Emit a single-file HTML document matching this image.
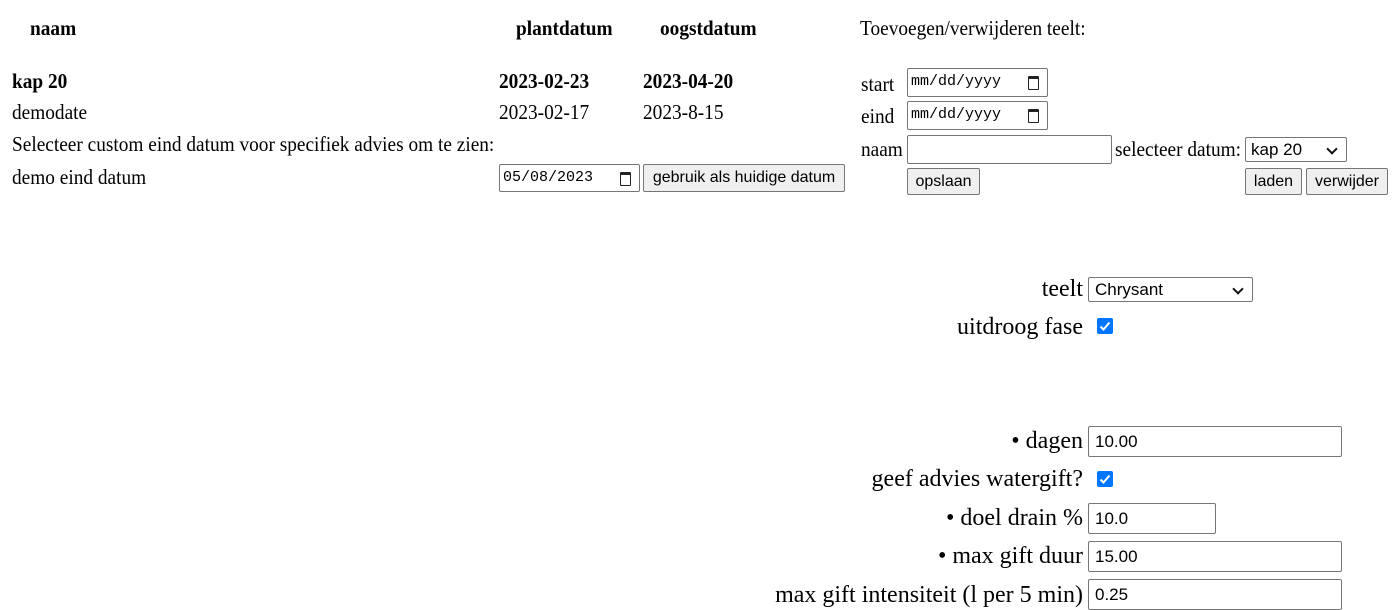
<!DOCTYPE html>
<html><head><style>
body{margin:0;width:1395px;height:609px;overflow:hidden;background:#fff;font-family:"Liberation Serif",serif;font-size:21px;color:#000;position:relative}
.t{position:absolute;white-space:nowrap;line-height:22px;transform:scaleX(0.92);transform-origin:left center}
.b{font-weight:bold}
.r{text-align:right;transform:none;font-size:24px;line-height:24px}
.in{position:absolute;box-sizing:border-box;border:1px solid #767676;border-radius:2px;background:#fff;font-family:"Liberation Sans",sans-serif;font-size:17px;padding:0 6px;line-height:26px;white-space:nowrap}
.dt{font-family:"Liberation Mono",monospace;font-size:15px;padding-left:3px}
.cal{position:absolute;right:8px;top:7px;width:9px;height:10px;border:1.6px solid #222;border-top-width:3px;border-radius:1px}
.btn{position:absolute;box-sizing:border-box;border:1px solid #767676;border-radius:2px;background:#efefef;font-family:"Liberation Sans",sans-serif;font-size:16px;text-align:center;line-height:25px;white-space:nowrap}
.cb{position:absolute;width:16px;height:16px;background:#0075ff;border-radius:2px}
.cb svg{display:block}
.chev{position:absolute;right:10px;top:7px;width:6px;height:6px;border-right:2px solid #111;border-bottom:2px solid #111;transform:rotate(45deg)}
</style></head><body>
<div class="t b" style="left:30px;top:17px">naam</div>
<div class="t b" style="left:516px;top:17px">plantdatum</div>
<div class="t b" style="left:660px;top:17px">oogstdatum</div>
<div class="t" style="left:860px;top:17px">Toevoegen/verwijderen teelt:</div>

<div class="t b" style="left:12px;top:70px">kap 20</div>
<div class="t b" style="left:499px;top:70px">2023-02-23</div>
<div class="t b" style="left:643px;top:70px">2023-04-20</div>
<div class="t" style="left:12px;top:101px">demodate</div>
<div class="t" style="left:499px;top:101px">2023-02-17</div>
<div class="t" style="left:643px;top:101px">2023-8-15</div>
<div class="t" style="left:12px;top:133px">Selecteer custom eind datum voor specifiek advies om te zien:</div>
<div class="t" style="left:12px;top:166px">demo eind datum</div>
<div class="in dt" style="left:499px;top:164px;width:141px;height:28px">05/08/2023<span class="cal"></span></div>
<div class="btn" style="left:643px;top:164px;width:202px;height:28px">gebruik als huidige datum</div>

<div class="t" style="left:861px;top:73px">start</div>
<div class="in dt" style="left:907px;top:68px;width:141px;height:29px">mm/dd/yyyy<span class="cal"></span></div>
<div class="t" style="left:861px;top:105px">eind</div>
<div class="in dt" style="left:907px;top:101px;width:141px;height:29px">mm/dd/yyyy<span class="cal"></span></div>
<div class="t" style="left:861px;top:138px">naam</div>
<div class="in" style="left:907px;top:135px;width:205px;height:29px"></div>
<div class="t" style="left:1115px;top:138px">selecteer datum:</div>
<div class="in" style="left:1245px;top:137px;width:102px;height:25px;line-height:23px;padding-left:5px">kap 20<span class="chev"></span></div>
<div class="btn" style="left:907px;top:168px;width:73px;height:27px">opslaan</div>
<div class="btn" style="left:1245px;top:168px;width:57px;height:27px">laden</div>
<div class="btn" style="left:1306px;top:168px;width:82px;height:27px">verwijder</div>

<div class="t r" style="right:312px;top:277px">teelt</div>
<div class="in" style="left:1088px;top:277px;width:165px;height:25px;line-height:23px;padding-left:6px">Chrysant<span class="chev"></span></div>
<div class="t r" style="right:312px;top:315px">uitdroog fase</div>
<div class="cb" style="left:1097px;top:318px"><svg width="16" height="16"><path d="M3.5 8.5l3 3 6-7" stroke="#fff" stroke-width="2" fill="none"/></svg></div>

<div class="t r" style="right:312px;top:429px">• dagen</div>
<div class="in" style="left:1088px;top:426px;width:254px;height:31px;line-height:29px">10.00</div>
<div class="t r" style="right:312px;top:467px">geef advies watergift?</div>
<div class="cb" style="left:1097px;top:471px"><svg width="16" height="16"><path d="M3.5 8.5l3 3 6-7" stroke="#fff" stroke-width="2" fill="none"/></svg></div>
<div class="t r" style="right:312px;top:506px">• doel drain %</div>
<div class="in" style="left:1088px;top:503px;width:128px;height:31px;line-height:29px">10.0</div>
<div class="t r" style="right:312px;top:544px">• max gift duur</div>
<div class="in" style="left:1088px;top:541px;width:254px;height:31px;line-height:29px">15.00</div>
<div class="t r" style="right:312px;top:583px">max gift intensiteit (l per 5 min)</div>
<div class="in" style="left:1088px;top:579px;width:254px;height:31px;line-height:29px">0.25</div>
</body></html>
